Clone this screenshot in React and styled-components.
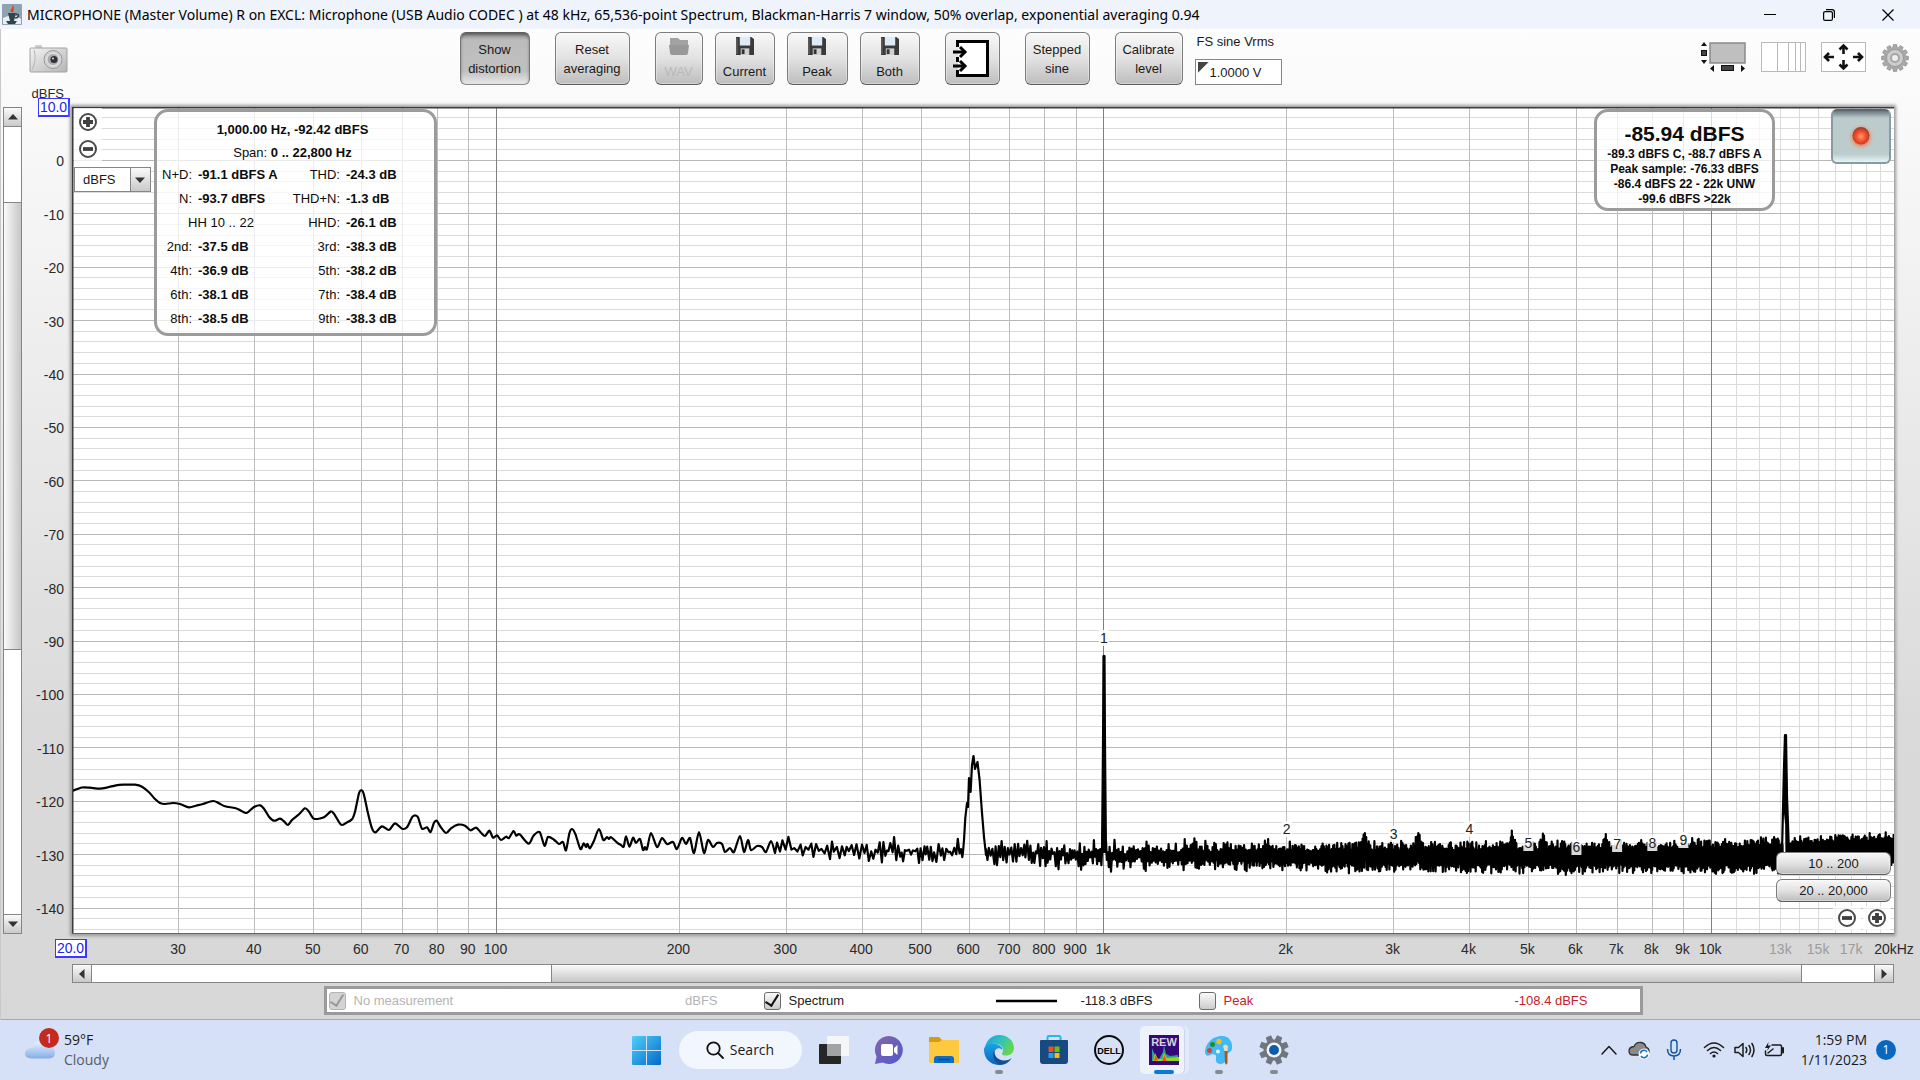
import React from "react";
import styled, { createGlobalStyle, css } from "styled-components";

const Global = createGlobalStyle`
  * { box-sizing: border-box; }
  body { margin: 0; background: #d6e1f8; }
  button, input, select { font: inherit; color: inherit; margin: 0; }
`;

const arial = `"Liberation Sans", Arial, sans-serif`;
const segoe = `"Open Sans", "Noto Sans", sans-serif`;

/* ---------- shell ---------- */

const Desktop = styled.div`
  display: flex;
  flex-direction: column;
  min-height: 100vh;
  color: #1a1a1a;
  font: 13px/19px ${arial};
`;

const TitleBar = styled.header`
  display: flex;
  align-items: center;
  height: 29px;
  padding: 0 3px 0 2px;
  gap: 5px;
  background: #eff3fb;
  color: #000;
  font: 14px/20px "Noto Sans", ${segoe};
`;

const Title = styled.h1`
  flex: 1;
  margin: 0;
  font: inherit;
  white-space: nowrap;
  overflow: hidden;
`;

const WindowButtons = styled.div`
  display: flex;
`;

const WindowButton = styled.button`
  display: grid;
  place-items: center;
  width: 59px;
  height: 29px;
  padding: 0;
  border: 0;
  background: none;
`;

const AppWindow = styled.main`
  flex: 1;
  display: flex;
  flex-direction: column;
  box-shadow: inset 1px 0 #c8c8c8, inset 0 -1px #a9a9a9;
  background: linear-gradient(#fdfdfd, #f4f4f4 20%, #dadada 70%, #d7d7d7);
`;

/* ---------- toolbar ---------- */

const Toolbar = styled.div`
  display: flex;
  justify-content: space-between;
  height: 78px;
  padding: 3px 11px 0 29px;
`;

const ToolGroup = styled.div`
  display: flex;
  gap: ${(p) => p.$gap || 25}px;
`;

const RightTools = styled(ToolGroup)`
  padding: 10px 0 0 28px;
  align-items: flex-start;
`;

const IconButton = styled.button`
  display: block;
  padding: 0;
  border: 0;
  background: none;
  height: 30px;
  line-height: 0;
  margin-top: ${(p) => p.$top || 0}px;
`;

const bevel = css`
  border: 1px solid #7c7c7c;
  border-bottom-color: #5c5c5c;
  border-radius: 6px;
  background: linear-gradient(#f8f8f8, #e2e2e2 50%, #bdbdbd);
  box-shadow: inset 0 0 0 1px rgba(255, 255, 255, 0.35);
`;

const ToolButton = styled.button`
  ${bevel}
  display: flex;
  flex-direction: column;
  align-items: center;
  justify-content: center;
  width: ${(p) => p.$w}px;
  height: 53px;
  padding: 0;
  line-height: 19px;
  white-space: nowrap;
  ${(p) =>
    p.$pressed &&
    css`
      border-color: #5e5e5e #777 #8a8a8a;
      background: linear-gradient(#8d8d8d, #bcbcbc 14%, #c0c0c0 75%, #e8e8e8);
      box-shadow: inset 0 2px 3px rgba(0, 0, 0, 0.35);
    `}
  &:disabled {
    color: #b9b9b9;
  }
  svg {
    margin: 0 0 7px;
  }
`;

const InputsButton = styled(ToolButton)`
  svg {
    margin: 0;
  }
`;

const VoltField = styled.div`
  display: flex;
  flex-direction: column;
  justify-content: space-between;
  width: 87px;
  height: 53px;
  label {
    padding-left: 2px;
    white-space: nowrap;
  }
  input {
    height: 26px;
    width: 100%;
    padding: 0 4px 0 14px;
    border: 1px solid #858585;
    border-radius: 0;
    background: linear-gradient(135deg, #444 7px, #fff 8px) 2px 2px no-repeat, #fff;
  }
`;

/* ---------- analyser area ---------- */

const Analyser = styled.section`
  flex: 1;
  display: grid;
  grid-template-columns: 19px 50px minmax(0, 1fr) 26px;
  grid-template-rows: minmax(400px, 1fr) 30px 19px auto;
  padding: 0 0 5px 3px;
`;

const ScrollBar = styled.div`
  display: flex;
  flex-direction: ${(p) => (p.$vertical ? "column" : "row")};
  grid-column: ${(p) => (p.$vertical ? 1 : 3)};
  grid-row: ${(p) => (p.$vertical ? 1 : 3)};
  border: 1px solid #868686;
  background: #fff;
`;

const ScrollEnd = styled.button`
  display: grid;
  place-items: center;
  flex: 0 0 18px;
  padding: 0;
  border: 0;
  background: linear-gradient(#fafafa, #c9c9c9);
  box-shadow: 0 0 0 1px #868686;
`;

const Track = styled.div`
  flex: ${(p) => p.$part} 1 0;
`;

const Thumb = styled.div`
  flex: ${(p) => p.$part} 1 0;
  box-shadow: 0 0 0 1px #868686;
  background: linear-gradient(${(p) => (p.$vertical ? "to right" : "to bottom")}, #fafafa, #c6c6c6);
`;

const AxisColumn = styled.div`
  grid-column: 2;
  grid-row: 1;
  position: relative;
`;

const AxisRow = styled.div`
  grid-column: 3;
  grid-row: 2;
  position: relative;
`;

const AxisDrawing = styled.svg`
  display: block;
  width: 100%;
  height: 100%;
  overflow: visible;
  font: 14px ${arial};
  fill: #2a2a2a;
`;

const LimitInput = styled.input`
  position: absolute;
  width: 32px;
  height: 19px;
  padding: 0;
  border: 2px solid #3a3aff;
  border-width: 1px 2px 2px 1px;
  background: #fff;
  color: #2222ee;
  font: 14px/16px ${arial};
  text-align: center;
`;

const TopLimit = styled(LimitInput)`
  top: -9px;
  right: 2px;
`;

const LeftLimit = styled(LimitInput)`
  top: 5px;
  left: -17px;
`;

const Plot = styled.div`
  grid-column: 3;
  grid-row: 1;
  position: relative;
  background: #fff;
  box-shadow: 0 0 3px 2px #9a9a9a;
`;

const PlotDrawing = styled.svg`
  position: absolute;
  inset: 0;
  width: 100%;
  height: 100%;
`;

const MarkerText = styled.text`
  font: 14px ${arial};
  text-anchor: middle;
  fill: #222;
`;

const ZoomY = styled.div`
  position: absolute;
  left: 2px;
  top: 1px;
  display: flex;
  flex-direction: column;
  align-items: flex-start;
`;

const RoundButton = styled.button`
  display: grid;
  place-items: center;
  width: 28px;
  height: 27px;
  padding: 0;
  border: 0;
  background: rgba(255, 255, 255, 0.75);
`;

const UnitPicker = styled.div`
  position: relative;
  margin-top: 5px;
  width: 77px;
  height: 25px;
  border: 1px solid #858585;
  background: linear-gradient(#858585, #858585) 55px 0 / 1px 100% no-repeat,
    linear-gradient(#fafafa, #c9c9c9) 56px 0 / 20px 100% no-repeat, #fff;
  select {
    appearance: none;
    width: 100%;
    height: 100%;
    padding: 0 24px 0 8px;
    border: 0;
    background: none;
  }
  svg {
    position: absolute;
    right: 4px;
    top: 6px;
    pointer-events: none;
  }
`;

const Readout = styled.section`
  position: absolute;
  top: 2px;
  border: 3px solid #9b9b9b;
  border-radius: 14px;
  background: rgba(255, 255, 255, 0.72);
  color: #0c0c0c;
  text-align: center;
`;

const DistortionPanel = styled(Readout)`
  left: 82px;
  width: 283px;
  padding: 6px 5px 0;
  height: 227px;
`;

const Line = styled.div`
  padding-right: 6px;
  line-height: 23px;
  white-space: nowrap;
`;

const DistortionTable = styled.table`
  width: 100%;
  table-layout: fixed;
  border-collapse: collapse;
  line-height: 22px;
  th, td {
    padding: 0;
    height: 24px;
    white-space: nowrap;
    vertical-align: top;
  }
  th {
    font-weight: normal;
    text-align: right;
    padding-right: 6px;
  }
  td {
    font-weight: bold;
    text-align: left;
  }
  th[colspan] {
    text-align: center;
    padding: 0 12px 0 0;
  }
`;

const MeterPanel = styled(Readout)`
  right: 119px;
  width: 181px;
  height: 102px;
  padding-top: 8px;
  font-weight: bold;
  font-size: 12px;
  line-height: 15px;
  white-space: nowrap;
`;

const MeterValue = styled.div`
  font-size: 21px;
  line-height: 27px;
`;

const RecordButton = styled.button`
  position: absolute;
  top: 2px;
  right: 3px;
  display: grid;
  place-items: center;
  width: 60px;
  height: 55px;
  padding: 0;
  border: 2px solid #869ba3;
  border-top-color: #5b6872;
  border-radius: 6px;
  background: linear-gradient(#6a7780, #bccccc 14%, #bccccc 84%, #e6f4f4);
`;

const RangeTools = styled.div`
  position: absolute;
  right: 3px;
  bottom: 4px;
  width: 115px;
  display: flex;
  flex-direction: column;
  align-items: flex-end;
  gap: 4px;
`;

const RangeButton = styled.button`
  ${bevel}
  width: 100%;
  height: 23px;
  padding: 0;
  line-height: 19px;
`;

const ZoomX = styled.div`
  display: flex;
  gap: 2px;
  ${RoundButton} {
    height: 24px;
  }
`;

/* ---------- legend ---------- */

const Legend = styled.div`
  grid-column: 3;
  justify-self: center;
  display: grid;
  grid-template-columns: repeat(3, minmax(0, 1fr));
  width: 100%;
  max-width: 1319px;
  height: 29px;
  margin-top: 3px;
  padding: 0 6px 0 2px;
  border: 3px solid #9a9a9a;
  background: #fff;
  line-height: 19px;
`;

const LegendItem = styled.div`
  display: flex;
  align-items: center;
  padding-right: 46px;
  color: ${(p) => p.$color};
  label {
    display: flex;
    align-items: center;
    gap: 8px;
    flex: 1;
  }
  svg {
    margin-right: 23px;
  }
`;

const Check = styled.input`
  appearance: none;
  width: 17px;
  height: 18px;
  border: 1px solid ${(p) => (p.disabled ? "#b4b4b4" : "#6c6c6c")};
  border-radius: 3px;
  background: ${(p) => (p.disabled ? "#d4d4d4" : "linear-gradient(#fafafa, #cccccc)")};
  display: grid;
  place-items: center;
  &:checked::after {
    content: "";
    width: 6px;
    height: 12px;
    margin-top: -4px;
    border: solid ${(p) => (p.disabled ? "#999" : "#111")};
    border-width: 0 2px 2px 0;
    transform: rotate(32deg);
  }
`;

/* ---------- taskbar ---------- */

const Taskbar = styled.footer`
  display: grid;
  grid-template-columns: 1fr auto 1fr;
  height: 60px;
  background: #d6e1f8;
  font: 14px/20px ${segoe};
`;

const Weather = styled.button`
  display: flex;
  align-items: center;
  justify-self: start;
  gap: 4px;
  padding: 0 0 0 24px;
  border: 0;
  background: none;
  text-align: left;
`;

const Muted = styled.span`
  display: block;
  color: #555c66;
`;

const Pinned = styled.nav`
  display: flex;
  align-items: center;
`;

const TaskButton = styled.button`
  position: relative;
  display: grid;
  place-items: center;
  width: ${(p) => (p.$active ? 49 : 55)}px;
  height: 48px;
  margin: 0 ${(p) => (p.$active ? 3 : 0)}px;
  padding: 0;
  border: 0;
  border-radius: 5px;
  background: ${(p) => (p.$active ? "#eef2fc" : "none")};
  box-shadow: ${(p) => (p.$active ? "inset -4px 0 0 #e2e9f9, inset -5px 0 0 #ccd6ea" : "none")};
  &::after {
    content: "";
    position: absolute;
    bottom: 0;
    width: ${(p) => (p.$active ? 20 : p.$running ? 8 : 0)}px;
    height: 4px;
    border-radius: 2px;
    background: ${(p) => (p.$active ? "#0a7ad6" : "#858b93")};
  }
`;

const SearchButton = styled.button`
  display: flex;
  align-items: center;
  justify-content: center;
  gap: 6px;
  width: 123px;
  height: 38px;
  margin: 0 5px;
  padding: 0;
  border: 0;
  border-radius: 19px;
  background: #f2f6fd;
`;

const Tray = styled.div`
  display: flex;
  align-items: center;
  justify-content: flex-end;
  padding-right: 24px;
`;

const TrayButton = styled.button`
  display: grid;
  place-items: center;
  width: ${(p) => p.$w || 30}px;
  height: 40px;
  padding: 0;
  border: 0;
  background: none;
`;

const Clock = styled.button`
  margin: 0 9px 0 3px;
  padding: 0;
  border: 0;
  background: none;
  text-align: right;
  width: 70px;
  white-space: nowrap;
`;

const Badge = styled.span`
  display: grid;
  place-items: center;
  width: 20px;
  height: 20px;
  border-radius: 50%;
  background: #0a67c0;
  color: #fff;
  font-size: 12px;
`;

/* ---------- spectrum data ---------- */

const W = 1822;
const H = 827;
const TOP_DB = 10;
const PX_PER_DB = 5.34;

const freqX = (f) => (Math.log10(f / 20) / 3) * W;
const dbY = (db) => (TOP_DB - db) * PX_PER_DB;

const lowTrace = [
  0, 684, 10, 680.5, 18, 680.7, 28, 681.7, 36, 680.3, 44, 678.3, 52, 677.7, 63, 677.7, 70, 679.7, 77, 685.3, 83, 692,
  88, 696, 93, 697, 101, 696, 108, 697, 117, 700.3, 124, 698.7, 131, 697, 141, 694, 147, 696.3, 153, 699.3, 163, 701,
  169, 703.7, 174, 706, 177, 704.3, 182, 700, 188, 698.3, 192, 701.7, 197, 709.7, 202, 713.7, 208, 711.7, 212, 714.3,
  216, 718, 220, 713, 227, 707.3, 233, 701.3, 237, 704.7, 242, 711.7, 252, 710.3, 259, 704.3, 263, 708.3, 269, 717.7,
  274, 716, 280, 712.3, 283, 704.7, 287, 686.3, 289.6, 683.3, 292, 688, 296, 706.3, 300, 721.3, 303.5, 725.3,
  310, 719.3, 317, 723, 323, 716.3, 330, 721.7, 335, 720.3, 340, 710.3, 343, 708.3, 346, 710.3, 350, 721.7, 355, 720.3,
  358.6, 725, 362, 715.7, 364.7, 713.7, 368, 719, 374, 726, 379, 721.3, 386, 717.7, 393, 718.7, 398.6, 723.3,
  404, 720.7, 409, 725.7, 413, 729, 417.4, 723.7, 421, 730.7, 425, 728.3, 429, 733, 434, 729.7, 437, 731, 441.5, 724,
  444.3, 728.7, 447.6, 727.3, 456.6, 736.7, 461.5, 728.7, 467.6, 725, 472.5, 738.7, 476, 730, 482, 732.7, 487, 737,
  491, 735, 494, 743.3, 497.4, 726.3, 500, 722, 503.5, 727.3, 508.4, 742, 511.7, 736.3, 514, 740, 515.5, 737,
  518, 741.3, 522, 733.7, 527, 722, 531.3, 733, 535, 730, 537, 732, 539, 730.3, 546, 736.3, 549, 738, 551.7, 739.7,
  554, 729.3, 557.4, 739.7, 561, 730.7, 564, 736, 568, 732, 571, 743, 573, 740, 575, 742, 579, 726, 585, 740, 590, 731,
  595, 737, 601, 735, 605, 742, 610, 731, 614, 737, 618, 731, 622, 746, 627, 725, 632, 746, 636, 733, 641, 740,
  645, 736, 650, 737, 653, 745, 658, 741, 662, 745, 668, 729, 672, 745, 676, 733, 679, 743, 685, 739, 690, 740,
  694, 745, 699, 734, 703, 746,
];

const hump = [
  891, 745, 892, 733, 893.3, 711, 895, 696, 896, 700, 897, 671, 898.6, 685, 900, 658, 901.5, 649, 903, 662,
  905.5, 655, 907.6, 673, 910, 706, 912, 730, 914, 748,
];

const bumps = [
  [1120, -6, 12], [1195, -5, 8], [1293, -10, 6], [1346, -14, 5], [1352, 6, 1], [1440, -14, 4], [1472, -12, 4],
  [1494, 6, 1], [1534, -13, 3], [1598, -6, 1], [1620, -10, 2],
];

function makeRandom(seed) {
  let s = seed;
  return () => {
    s = (s * 1664525 + 1013904223) % 4294967296;
    return s / 4294967296;
  };
}

function lerp(table, x) {
  for (let i = 1; i < table.length; i++) {
    const [x0, y0] = table[i - 1];
    const [x1, y1] = table[i];
    if (x <= x1) return y0 + ((y1 - y0) * (x - x0)) / (x1 - x0);
  }
  return table[table.length - 1][1];
}

const centre = [[700, 739], [760, 742], [830, 744], [914, 745], [1032, 748], [1250, 750], [1500, 750], [1600, 750], [1711, 748], [1822, 743]];
const core = [[700, 1], [890, 2], [1032, 3], [1150, 5], [1300, 7], [1500, 8], [1640, 9], [1822, 11]];
const tips = [[700, 9], [890, 10], [1032, 11], [1200, 9], [1822, 8]];
const drift = [[700, 4], [1032, 3], [1200, 1], [1822, 1]];
const step = [[700, 3], [800, 2], [890, 1.7], [1032, 1.1], [1200, 0.7], [1400, 0.6], [1822, 0.5]];

/* Interpolated curve: the few low-frequency bins are drawn as a smooth line. */
function smooth(points) {
  let d = `M${points[0].join(" ")}`;
  for (let i = 0; i < points.length - 1; i++) {
    const p0 = points[Math.max(0, i - 1)];
    const p1 = points[i];
    const p2 = points[i + 1];
    const p3 = points[Math.min(points.length - 1, i + 2)];
    const c = [
      p1[0] + (p2[0] - p0[0]) / 7, p1[1] + (p2[1] - p0[1]) / 7,
      p2[0] - (p3[0] - p1[0]) / 7, p2[1] - (p3[1] - p1[1]) / 7,
    ].map((v) => v.toFixed(1));
    d += `C${c[0]} ${c[1]} ${c[2]} ${c[3]} ${p2[0]} ${p2[1]}`;
  }
  return d;
}

function tracePath() {
  const low = [];
  for (let i = 0; i < lowTrace.length; i += 2) low.push([lowTrace[i], lowTrace[i + 1]]);
  const pts = [];
  const rnd = makeRandom(77);
  let side = 1;
  const noise = (from, to) => {
    for (let x = from; x < to; x += lerp(step, x) * (0.7 + rnd() * 0.6)) {
      side = -side;
      const swing = lerp(core, x) + Math.pow(rnd(), 2) * lerp(tips, x);
      let y = lerp(centre, x) + side * swing + (rnd() - 0.5) * 2 * lerp(drift, x);
      for (const [bx, h, w] of bumps) {
        const d = Math.abs(x - bx);
        if (d < w) y += h * (1 - d / w) * (side * h > 0 ? 1 : 0.3);
      }
      pts.push([x, y]);
    }
  };
  noise(705, 891);
  for (let i = 0; i < hump.length; i += 2) pts.push([hump[i], hump[i + 1]]);
  noise(914, 1030);
  pts.push([1030, 745], [1031, 640], [1031.5, 549], [1032.5, 549], [1033, 640], [1034, 745]);
  pts.push([1031.5, 745], [1032, 549], [1032.5, 745]);
  noise(1034, 1711);
  pts.push([1710, 745], [1712, 660], [1713, 628], [1714, 628], [1715, 690], [1717, 745]);
  pts.push([1712.5, 700], [1713.5, 628], [1714.5, 745]);
  noise(1717, 1822);
  return smooth(low) + "L" + pts.map(([x, y]) => `${x.toFixed(1)} ${y.toFixed(1)}`).join("L");
}

const trace = tracePath();

const decades = [100, 1000, 10000];
const majors = [30, 40, 50, 60, 70, 80, 90, 200, 300, 400, 500, 600, 700, 800, 900, 2000, 3000, 4000, 5000, 6000, 7000, 8000, 9000];
const minors = [11, 12, 13, 14, 15, 16, 17, 18, 19].map((k) => k * 1000);
const dbLines = Array.from({ length: 77 }, (_, i) => 8 - i * 2);
const dbLabels = Array.from({ length: 15 }, (_, i) => -i * 10);

const harmonics = [
  [1, 1000, 531], [2, 2000, 722], [3, 3000, 727], [4, 4000, 722], [5, 5000, 736],
  [6, 6000, 740], [7, 7000, 737], [8, 8000, 736], [9, 9000, 733],
];

const freqLabels = [
  ...majors.map((f) => [f, f < 1000 ? `${f}` : `${f / 1000}k`]),
  [100, "100"], [1000, "1k"], [10000, "10k"],
];
const pct = (v, total) => `${(v / total) * 100}%`;

function Spectrum() {
  return (
    <PlotDrawing viewBox={`0 0 ${W} ${H}`} preserveAspectRatio="none" role="img" aria-label="Spectrum">
      <g shapeRendering="crispEdges" strokeWidth="1">
        {minors.map((f) => <line key={f} x1={freqX(f)} x2={freqX(f)} y1="0" y2={H} stroke="#dcdcdc" />)}
        {dbLines.map((d) => <line key={d} x1="0" x2={W} y1={dbY(d)} y2={dbY(d)} stroke={d % 10 ? "#dadada" : "#b8b8b8"} />)}
        {majors.map((f) => <line key={f} x1={freqX(f)} x2={freqX(f)} y1="0" y2={H} stroke="#bdbdbd" />)}
        {decades.map((f) => <line key={f} x1={freqX(f)} x2={freqX(f)} y1="0" y2={H} stroke="#808080" />)}
      </g>
      <path d={trace} fill="none" stroke="#000" strokeWidth="2.2" strokeLinejoin="round" />
      {harmonics.map(([n, f, y]) => (
        <g key={n}>
          <rect x={freqX(f) - 5} y={y - 8} width="10" height="16" fill="#fff" opacity="0.85" />
          <MarkerText x={freqX(f)} y={y + 5}>{n}</MarkerText>
        </g>
      ))}
      <path d={`M0 ${H}V0H${W}`} fill="none" stroke="#3c3c3c" strokeWidth="3" />
      <path d={`M0 ${H}H${W}`} fill="none" stroke="#666" strokeWidth="2" />
    </PlotDrawing>
  );
}

/* ---------- icons ---------- */

const Arrow = ({ dir }) => (
  <svg width="12" height="12" viewBox="0 0 12 12">
    <path d="M1 8.500H11L6 3Z" fill="#333" transform={`rotate(${{ up: 0, right: 90, down: 180, left: 270 }[dir]} 6 6)`} />
  </svg>
);

const ZoomIcon = ({ plus }) => (
  <svg width="20" height="20" viewBox="0 0 20 20">
    <circle cx="10" cy="10" r="8" fill="#fff" stroke="#4a4a4a" strokeWidth="2" />
    <path d={plus ? "M5 10H15M10 5V15" : "M5 10H15"} stroke="#3f3f3f" strokeWidth="3.800" />
  </svg>
);

const JavaIcon = () => (
  <svg width="20" height="21" viewBox="0 0 20 21">
    <rect width="20" height="21" rx="1" fill="#8ea3ad" />
    <path d="M1 20V14L6 12H15L19 15V20Z" fill="#e9eef0" />
    <path d="M6 9H14L12 17H8Z" fill="#33434d" />
    <path d="M9 8C7 5 12 5 10 1C14 4 10 6 12 8Z" fill="#d8431c" />
    <path d="M4 17H15L13 20H6Z" fill="#32434d" />
    <path d="M14 10C18 10 17 14 13 14" fill="none" stroke="#33434d" strokeWidth="1.4" />
  </svg>
);

const CameraIcon = () => (
  <svg width="39" height="28" viewBox="0 0 39 28">
    <defs>
      <linearGradient id="cam" x1="0" y1="0" x2="1" y2="1">
        <stop offset="0" stopColor="#f4f4f4" /><stop offset="1" stopColor="#b4b4b4" />
      </linearGradient>
    </defs>
    <rect x="6" y="0" width="7" height="4" rx="1" fill="#ccc" />
    <rect x="1" y="3" width="37" height="24" rx="1" fill="url(#cam)" stroke="#a2a2a2" />
    <path d="M5 5Q8 15 3 25" fill="none" stroke="#b5b5b5" />
    <circle cx="24" cy="14.500" r="9" fill="#d4d4d4" stroke="#999" />
    <circle cx="24" cy="14.500" r="6" fill="#aaa" stroke="#e6e6e6" />
    <circle cx="25" cy="14.500" r="3.500" fill="#2f3238" />
    <circle cx="24" cy="13.500" r="1" fill="#ddd" />
  </svg>
);

const DiskIcon = () => (
  <svg width="18" height="18" viewBox="0 0 19 19">
    <path d="M0 0H16L19 2V19H0Z" fill="#3a3a3a" />
    <rect x="4" y="0" width="11" height="9" fill="#dcebf5" />
    <path d="M5 12H14V19H5Z" fill="#cfcfcf" />
    <rect x="6" y="13" width="3" height="5" fill="#333" />
    <path d="M1 1V18" stroke="#777" />
  </svg>
);

const FolderGrey = () => (
  <svg width="20" height="18" viewBox="0 0 20 18">
    <path d="M1 1H9L11 3H19V9H1Z" fill="#a2a2a2" />
    <path d="M0 8H20L19 16Q19 18 17 18H3Q1 18 1 16Z" fill="#989898" />
  </svg>
);

const InputsIcon = () => (
  <svg width="40" height="40" viewBox="0 0 40 40">
    <rect x="6" y="2.500" width="30" height="34" fill="#fff" />
    <path d="M5.500 8V2.500H35.500V36.500H5.500V31M5.500 18V23" fill="none" stroke="#000" strokeWidth="3" />
    <path d="M1 13H12M1 27H12" stroke="#000" strokeWidth="3" />
    <path d="M8 8L13 13L8 18M8 22L13 27L8 32" fill="none" stroke="#000" strokeWidth="3" />
  </svg>
);

const ScrollbarsIcon = () => (
  <svg width="45" height="30" viewBox="0 0 45 30">
    <rect x="9" y="1" width="35" height="20" fill="#bfbfbf" stroke="#8a8a8a" strokeWidth="1.500" />
    <path d="M0 4H6L3 0ZM0 18H6L3 22ZM13 23V30L9 26.500ZM40 23V30L44 26.500Z" fill="#111" />
    <rect x="0.500" y="8.500" width="5" height="5" fill="#444" stroke="#111" />
    <rect x="20.500" y="23.500" width="12" height="5" fill="#444" stroke="#111" />
  </svg>
);

const LogGridIcon = () => (
  <svg width="45" height="30" viewBox="0 0 45 30">
    <rect x="0.500" y="0.500" width="44" height="29" fill="#fff" stroke="#b9b9b9" />
    <path d="M16.500 0V30M27.500 0V30M34.500 0V30M39.500 0V30" stroke="#b9b9b9" />
  </svg>
);

const MoveIcon = () => (
  <svg width="45" height="30" viewBox="0 0 45 30">
    <rect x="0.500" y="0.500" width="44" height="29" fill="#fff" stroke="#b9b9b9" />
    <path
      d="M22.500 12V4M18.500 7.500L22.500 3.500L26.500 7.500M22.500 18V26M18.500 22.500L22.500 26.500L26.500 22.500M13 15H4M8 11L4 15L8 19M32 15H41M37 11L41 15L37 19"
      fill="none" stroke="#111" strokeWidth="2.600"
    />
  </svg>
);

const gearPath = (teeth, ro, ri, w) => {
  let d = "";
  for (let i = 0; i < teeth; i++) {
    const a = (i / teeth) * Math.PI * 2;
    const s = (Math.PI / teeth) * w;
    const p = (r, t) => `${(Math.sin(t) * r).toFixed(2)} ${(-Math.cos(t) * r).toFixed(2)}`;
    d += `${i ? "L" : "M"}${p(ri, a - s * 1.3)}L${p(ro, a - s * 0.8)}L${p(ro, a + s * 0.8)}L${p(ri, a + s * 1.3)}`;
  }
  return d + "Z";
};

const PrefsIcon = () => (
  <svg width="28" height="28" viewBox="-14 -14 28 28">
    <path d={gearPath(12, 13.5, 10.5, 0.6)} fill="#a9a9a9" stroke="#8d8d8d" strokeWidth="0.700" />
    <circle r="8.500" fill="#cdcdcd" stroke="#9a9a9a" />
    <circle r="5" fill="#a5a5a5" />
    <circle r="3" fill="#eee" />
  </svg>
);

const RecordIcon = () => (
  <svg width="28" height="28" viewBox="0 0 28 28">
    <defs>
      <radialGradient id="glow"><stop offset="0.55" stopColor="#f0683f" stopOpacity="0.700" /><stop offset="1" stopColor="#f0a080" stopOpacity="0" /></radialGradient>
      <radialGradient id="led"><stop offset="0" stopColor="#ff9a6a" /><stop offset="0.600" stopColor="#f2502e" /><stop offset="1" stopColor="#d13a1c" /></radialGradient>
    </defs>
    <circle cx="14" cy="14" r="13" fill="url(#glow)" />
    <circle cx="14" cy="12.500" r="8.500" fill="#8a4a3e" />
    <circle cx="14" cy="13.500" r="8" fill="url(#led)" />
  </svg>
);

const WeatherIcon = () => (
  <svg width="36" height="52" viewBox="0 0 36 52">
    <defs>
      <linearGradient id="cloud" x1="0" y1="0" x2="0" y2="1"><stop offset="0" stopColor="#eaf3ff" /><stop offset="1" stopColor="#84aee8" /></linearGradient>
    </defs>
    <path d="M7 33.500Q1 33 1 28.500Q1.500 23 8 23Q10 15.500 17 16Q24 16 25 22Q31 22 31 28Q31 33 25 33.500Z" transform="translate(0 1)" fill="url(#cloud)" />
    <circle cx="25" cy="14" r="10" fill="#c42b1c" />
    <text x="25" y="18.500" textAnchor="middle" fontSize="12" fill="#fff" fontFamily="Open Sans">1</text>
  </svg>
);

const I = ({ children, w = 30, h = 30 }) => (
  <svg width={w} height={h} viewBox={`0 0 ${w} ${h}`}>{children}</svg>
);

const WindowsLogo = () => (
  <I w={29} h={29}>
    <defs><linearGradient id="win" x1="0" y1="0" x2="1" y2="1"><stop offset="0" stopColor="#4fd0fb" /><stop offset="1" stopColor="#0369c9" /></linearGradient></defs>
    <path d="M0 1Q0 0 1 0H14V14H0ZM15 0H28Q29 0 29 1V14H15ZM0 15H14V29H1Q0 29 0 28ZM15 15H29V28Q29 29 28 29H15Z" fill="url(#win)" />
  </I>
);

const SearchIcon = () => (
  <I w={18} h={18}><circle cx="7.500" cy="7.500" r="6.200" fill="none" stroke="#111" strokeWidth="1.800" /><path d="M12 12L17 17" stroke="#111" strokeWidth="1.800" strokeLinecap="round" /></I>
);

const TaskViewIcon = () => (
  <I>
    <rect x="0" y="9" width="22" height="20" rx="1" fill="#262626" />
    <rect x="8" y="1" width="22" height="20" rx="1" fill="#f6f7f8" opacity="0.950" />
    <rect x="8" y="9" width="14" height="12" fill="#a3a3a3" />
  </I>
);

const ChatIcon = () => (
  <I>
    <defs><linearGradient id="chat" x1="0" y1="0" x2="1" y2="1"><stop offset="0" stopColor="#8466a8" /><stop offset="1" stopColor="#5059d0" /></linearGradient></defs>
    <path d="M15 1A14 14 0 1 1 8.500 27.500L1 29L2.500 21.500A14 14 0 0 1 15 1Z" fill="url(#chat)" />
    <rect x="7" y="9" width="12" height="12" rx="2" fill="#fff" />
    <path d="M20 13L23.500 10V20L20 17Z" fill="#fff" />
  </I>
);

const ExplorerIcon = () => (
  <I>
    <path d="M0 3Q0 2 1 2H10L13 5V9H0Z" fill="#d99a13" />
    <path d="M0 7H10L13 5H29Q30 5 30 6V27Q30 28 29 28H1Q0 28 0 27Z" fill="#fcc93f" />
    <path d="M5 28V24Q5 21 8 21H22Q25 21 25 24V28Z" fill="#0f6cc4" />
    <path d="M9 24.500H21" stroke="#0a4b92" strokeWidth="1.500" />
  </I>
);

const EdgeIcon = () => (
  <I>
    <defs>
      <linearGradient id="edgeTop" x1="0" y1="0" x2="1" y2="0.500"><stop offset="0" stopColor="#1c9fd8" /><stop offset="0.500" stopColor="#2cbfc4" /><stop offset="1" stopColor="#62d84e" /></linearGradient>
      <linearGradient id="edgeLow" x1="0" y1="0" x2="0" y2="1"><stop offset="0" stopColor="#1ba3e6" /><stop offset="1" stopColor="#0b62c0" /></linearGradient>
    </defs>
    <path d="M1 12C3 4 9 0 15 0C24 0 30 6 30 13C30 18 26 20.500 22 20.500C18 20.500 17.500 19 18.500 17.500C20 15 19 10 13 9C8 8 3 9.500 1 12Z" fill="url(#edgeTop)" />
    <path d="M0 15C0 10 5 8.500 9 8.500C14 8.500 18.500 11.500 18.500 15C15 11 10 14 10 19C10 25 15 29 19 29.500C9 32 0 25 0 15Z" fill="url(#edgeLow)" />
    <path d="M11 15C9 20 14 25.500 20 25.500C24 25.500 26.500 24 27.500 23C25 28 20 30 16 29.800C10 27 7 20 11 15Z" fill="#12508f" />
  </I>
);

const StoreIcon = () => (
  <I>
    <path d="M8.500 7V2.500Q8.500 1 10 1H20Q21.500 1 21.500 2.500V7" fill="none" stroke="#2cb4ee" strokeWidth="2" />
    <path d="M1 6Q1 5 2 5H28Q29 5 29 6V26Q29 29 26 29H4Q1 29 1 26Z" fill="#174a80" />
    <rect x="9.500" y="11.500" width="5" height="5.500" fill="#ee5022" /><rect x="15.500" y="11.500" width="5" height="5.500" fill="#7eb900" />
    <rect x="9.500" y="18" width="5" height="5" fill="#1ba2ee" /><rect x="15.500" y="18" width="5" height="5" fill="#fdb813" />
  </I>
);

const DellIcon = () => (
  <I>
    <circle cx="15" cy="15" r="14" fill="none" stroke="#0b0b0b" strokeWidth="2" />
    <text x="15" y="18.500" textAnchor="middle" fontSize="9" fontWeight="bold" fontFamily="Liberation Sans">DELL</text>
  </I>
);

const RewIcon = () => (
  <I>
    <rect width="30" height="30" fill="#35087a" />
    <text x="15" y="11" textAnchor="middle" fontSize="11" fontWeight="bold" fill="#d4d2da" fontFamily="Liberation Sans">REW</text>
    <path d="M3 26V13L5 18L7 22L10 24L14 17L15 10L17 19L21 21L29 20V26Z" fill="#2f9a96" />
    <path d="M4 26L6 18L9 24L13 24L15 18L18 23L30 22V26Z" fill="#8ed81f" />
    <path d="M5 26L6.500 20L9 25ZM13 26L15.500 20L17.500 26Z" fill="#ff4a12" />
  </I>
);

const PaintIcon = () => (
  <I>
    <path d="M16 1C25 0 29 7 28 13C27.500 17 26 17 24 18C21 20 24 26 19 28.500C14 30 11 27 12 23C13 18 8 19 5 20.500C1 21.500 0 17 2 12C5 5 10 2 16 1Z" fill="#41b9f2" />
    <circle cx="15" cy="6.500" r="2.700" fill="#f3bd22" /><circle cx="8.500" cy="9.500" r="2.500" fill="#18902f" />
    <circle cx="5.500" cy="15.500" r="2.500" fill="#e0402c" /><circle cx="14" cy="16.500" r="2" fill="#e6f5fd" />
    <path d="M19 11Q21 8 24 11L23.500 16H20.500Z" fill="#f0dcb0" /><path d="M20.500 16H23.500L23.500 28Q22 31 21 28Z" fill="#a65a22" />
  </I>
);

const SettingsIcon = () => (
  <svg width="30" height="30" viewBox="-15 -15 30 30">
    <path d={gearPath(8, 15, 10.5, 0.6)} fill="#6f767d" transform="rotate(22.5)" />
    <circle r="7.500" fill="#f0f3f8" /><circle r="5" fill="#0d5cab" />
  </svg>
);

const s = { fill: "none", stroke: "#1b1b1b", strokeWidth: 1.5, strokeLinecap: "round", strokeLinejoin: "round" };

const ChevronIcon = () => <I w={18} h={12}><path d="M2 10L9 2.500L16 10" {...s} /></I>;
const CloudSyncIcon = () => (
  <I w={22} h={20}>
    <path d="M5 15Q1 15 1 11Q1 7 6 6.500Q8 2 13 2.500Q17 3 18 7Q21 8 21 11Q21 15 17 15Z" fill="#8a8a8a" stroke="#333" strokeWidth="1.300" />
    <circle cx="16" cy="14" r="5.500" fill="#fff" />
    <path d="M12.500 13.500A3.500 3.500 0 0 1 19 12M19.500 14.500A3.500 3.500 0 0 1 13 16" fill="none" stroke="#1676d0" strokeWidth="1.600" />
  </I>
);
const MicIcon = () => (
  <I w={16} h={22}><rect x="5" y="1" width="6" height="13" rx="3" fill="#cfe3fa" stroke="#14549a" strokeWidth="1.400" /><path d="M1.500 10Q1.500 17 8 17Q14.500 17 14.500 10M8 17V21" fill="none" stroke="#14549a" strokeWidth="1.500" /></I>
);
const WifiIcon = () => (
  <I w={22} h={18}><path d="M1.500 6.500Q11 -2.500 20.500 6.500M4.500 9.500Q11 3.500 17.500 9.500M7.500 12.500Q11 9.500 14.500 12.500" {...s} /><circle cx="11" cy="15" r="1.600" fill="#1b1b1b" /></I>
);
const SpeakerIcon = () => (
  <I w={22} h={18}><path d="M1 6.500H4.500L9 2.500V15.500L4.500 11.500H1ZM12 6.500Q13.500 9 12 11.500M15 4.500Q18 9 15 13.500M18 2.500Q22 9 18 15.500" {...s} /></I>
);
const BatteryIcon = () => (
  <I w={22} h={18}><path d="M9 4H17Q18.500 4 18.500 5.500V13Q18.500 14.500 17 14.500H4Q2.500 14.500 2.500 13V10" {...s} /><path d="M20 7V11.500" {...s} strokeWidth="2" /><path d="M5.500 1L2 7H5L4 10L8 4.500H5Z" fill="#1b1b1b" /><path d="M5 12L10 8" {...s} /></I>
);

/* ---------- app ---------- */

const distortionRows = [
  ["N+D:", "-91.1 dBFS A", "THD:", "-24.3 dB"],
  ["N:", "-93.7 dBFS", "THD+N:", "-1.3 dB"],
  ["HH 10 .. 22", null, "HHD:", "-26.1 dB"],
  ["2nd:", "-37.5 dB", "3rd:", "-38.3 dB"],
  ["4th:", "-36.9 dB", "5th:", "-38.2 dB"],
  ["6th:", "-38.1 dB", "7th:", "-38.4 dB"],
  ["8th:", "-38.5 dB", "9th:", "-38.3 dB"],
];

const taskApps = [
  ["Task view", TaskViewIcon], ["Chat", ChatIcon], ["File Explorer", ExplorerIcon], ["Edge", EdgeIcon, true],
  ["Store", StoreIcon], ["Dell", DellIcon], ["REW", RewIcon, false, true], ["Paint", PaintIcon, true], ["Settings", SettingsIcon, true],
];

export default function App() {
  return (
    <Desktop>
      <Global />
      <TitleBar>
        <JavaIcon />
        <Title>
          MICROPHONE (Master Volume) R on EXCL: Microphone (USB Audio CODEC ) at 48 kHz, 65,536-point Spectrum,
          Blackman-Harris 7 window, 50% overlap, exponential averaging 0.94
        </Title>
        <WindowButtons>
          <WindowButton aria-label="Minimize"><I w={12} h={12}><path d="M0 5.500H12" stroke="#000" /></I></WindowButton>
          <WindowButton aria-label="Restore">
            <I w={12} h={12}><rect x="0.600" y="2.600" width="8.800" height="8.800" rx="1.500" fill="none" stroke="#000" strokeWidth="1.200" /><path d="M3 0.600H9Q11.400 0.600 11.400 3V9" fill="none" stroke="#000" strokeWidth="1.200" /></I>
          </WindowButton>
          <WindowButton aria-label="Close"><I w={12} h={12}><path d="M0.500 0.500L11.500 11.500M11.500 0.500L0.500 11.500" stroke="#000" strokeWidth="1.200" /></I></WindowButton>
        </WindowButtons>
      </TitleBar>

      <AppWindow>
        <Toolbar>
          <IconButton $top={12} aria-label="Capture"><CameraIcon /></IconButton>
          <ToolGroup>
            <ToolButton $w={70} $pressed aria-pressed="true"><span>Show</span><span>distortion</span></ToolButton>
            <ToolButton $w={75}><span>Reset</span><span>averaging</span></ToolButton>
            <ToolGroup $gap={12}>
              <ToolButton $w={48} disabled><FolderGrey /><span>WAV</span></ToolButton>
              <ToolButton $w={60}><DiskIcon /><span>Current</span></ToolButton>
              <ToolButton $w={61}><DiskIcon /><span>Peak</span></ToolButton>
              <ToolButton $w={60}><DiskIcon /><span>Both</span></ToolButton>
            </ToolGroup>
            <InputsButton $w={55} aria-label="Inputs"><InputsIcon /></InputsButton>
            <ToolButton $w={65}><span>Stepped</span><span>sine</span></ToolButton>
            <ToolGroup $gap={12}>
              <ToolButton $w={68}><span>Calibrate</span><span>level</span></ToolButton>
              <VoltField>
                <label htmlFor="vrms">FS sine Vrms</label>
                <input id="vrms" defaultValue="1.0000 V" />
              </VoltField>
            </ToolGroup>
          </ToolGroup>
          <RightTools $gap={15}>
            <IconButton aria-label="Scrollbars"><ScrollbarsIcon /></IconButton>
            <IconButton aria-label="Frequency axis"><LogGridIcon /></IconButton>
            <IconButton aria-label="Graph limits"><MoveIcon /></IconButton>
            <IconButton aria-label="Graph settings" $top={1}><PrefsIcon /></IconButton>
          </RightTools>
        </Toolbar>

        <Analyser>
          <ScrollBar $vertical>
            <ScrollEnd aria-label="Scroll up"><Arrow dir="up" /></ScrollEnd>
            <Track $part={77} />
            <Thumb $part={446} $vertical />
            <Track $part={266} />
            <ScrollEnd aria-label="Scroll down"><Arrow dir="down" /></ScrollEnd>
          </ScrollBar>

          <AxisColumn>
            <AxisDrawing>
              <text x="42" y="-9" textAnchor="end" fontSize="13">dBFS</text>
              {dbLabels.map((d) => (
                <text key={d} x="42" y={pct(dbY(d), H)} dy="6" textAnchor="end">{d}</text>
              ))}
            </AxisDrawing>
            <TopLimit aria-label="Top limit" defaultValue="10.0" />
          </AxisColumn>

          <Plot>
            <Spectrum />
            <ZoomY>
              <RoundButton aria-label="Zoom in level"><ZoomIcon plus /></RoundButton>
              <RoundButton aria-label="Zoom out level"><ZoomIcon /></RoundButton>
              <UnitPicker>
                <select aria-label="Level unit" defaultValue="dBFS"><option>dBFS</option></select>
                <Arrow dir="down" />
              </UnitPicker>
            </ZoomY>
            <DistortionPanel>
              <Line><b>1,000.00 Hz, -92.42 dBFS</b></Line>
              <Line>Span: <b>0 .. 22,800 Hz</b></Line>
              <DistortionTable>
                <colgroup><col width="36" /><col width="94" /><col width="54" /><col /></colgroup>
                <tbody>
                  {distortionRows.map(([a, b, c, d]) => (
                    <tr key={a}>
                      {b ? <><th scope="row">{a}</th><td>{b}</td></> : <th scope="row" colSpan={2}>{a}</th>}
                      <th scope="row">{c}</th>
                      <td>{d}</td>
                    </tr>
                  ))}
                </tbody>
              </DistortionTable>
            </DistortionPanel>
            <MeterPanel>
              <MeterValue>-85.94 dBFS</MeterValue>
              <div>-89.3 dBFS C, -88.7 dBFS A</div>
              <div>Peak sample: -76.33 dBFS</div>
              <div>-86.4 dBFS 22 - 22k UNW</div>
              <div>-99.6 dBFS &gt;22k</div>
            </MeterPanel>
            <RecordButton aria-label="Record"><RecordIcon /></RecordButton>
            <RangeTools>
              <RangeButton>10 .. 200</RangeButton>
              <RangeButton>20 .. 20,000</RangeButton>
              <ZoomX>
                <RoundButton aria-label="Zoom out frequency"><ZoomIcon /></RoundButton>
                <RoundButton aria-label="Zoom in frequency"><ZoomIcon plus /></RoundButton>
              </ZoomX>
            </RangeTools>
          </Plot>

          <AxisRow>
            <AxisDrawing>
              {freqLabels.map(([f, t]) => (
                <text key={f} x={pct(freqX(f) - 1, W)} y="20" textAnchor="middle">{t}</text>
              ))}
              {[13, 15, 17].map((k) => (
                <text key={k} x={pct(freqX(k * 1000), W)} y="20" textAnchor="middle" fill="#9c9c9c">{k}k</text>
              ))}
              <text x="100%" y="20" textAnchor="middle">20kHz</text>
            </AxisDrawing>
            <LeftLimit aria-label="Left limit" defaultValue="20.0" />
          </AxisRow>

          <ScrollBar>
            <ScrollEnd aria-label="Scroll left"><Arrow dir="left" /></ScrollEnd>
            <Track $part={461} />
            <Thumb $part={1249} />
            <Track $part={74} />
            <ScrollEnd aria-label="Scroll right"><Arrow dir="right" /></ScrollEnd>
          </ScrollBar>

          <Legend>
            <LegendItem $color="#b4b4b4">
              <label><Check type="checkbox" defaultChecked disabled />No measurement</label>
              <span>dBFS</span>
            </LegendItem>
            <LegendItem $color="#1a1a1a">
              <label><Check type="checkbox" defaultChecked />Spectrum</label>
              <I w={61} h={4}><path d="M0 2H61" stroke="#000" strokeWidth="2.500" /></I>
              <span>-118.3 dBFS</span>
            </LegendItem>
            <LegendItem $color="#c8202c">
              <label><Check type="checkbox" />Peak</label>
              <span>-108.4 dBFS</span>
            </LegendItem>
          </Legend>
        </Analyser>
      </AppWindow>

      <Taskbar>
        <Weather>
          <WeatherIcon />
          <span>59°F<Muted>Cloudy</Muted></span>
        </Weather>
        <Pinned>
          <TaskButton aria-label="Start"><WindowsLogo /></TaskButton>
          <SearchButton><SearchIcon />Search</SearchButton>
          {taskApps.map(([name, Icon, running, active]) => (
            <TaskButton key={name} aria-label={name} $running={running} $active={active}><Icon /></TaskButton>
          ))}
        </Pinned>
        <Tray>
          <TrayButton aria-label="Hidden icons"><ChevronIcon /></TrayButton>
          <TrayButton aria-label="OneDrive"><CloudSyncIcon /></TrayButton>
          <TrayButton $w={40} aria-label="Microphone"><MicIcon /></TrayButton>
          <TrayButton $w={40} aria-label="Network"><WifiIcon /></TrayButton>
          <TrayButton $w={20} aria-label="Volume"><SpeakerIcon /></TrayButton>
          <TrayButton $w={40} aria-label="Battery"><BatteryIcon /></TrayButton>
          <Clock>1:59 PM<br />1/11/2023</Clock>
          <Badge>1</Badge>
        </Tray>
      </Taskbar>
    </Desktop>
  );
}
